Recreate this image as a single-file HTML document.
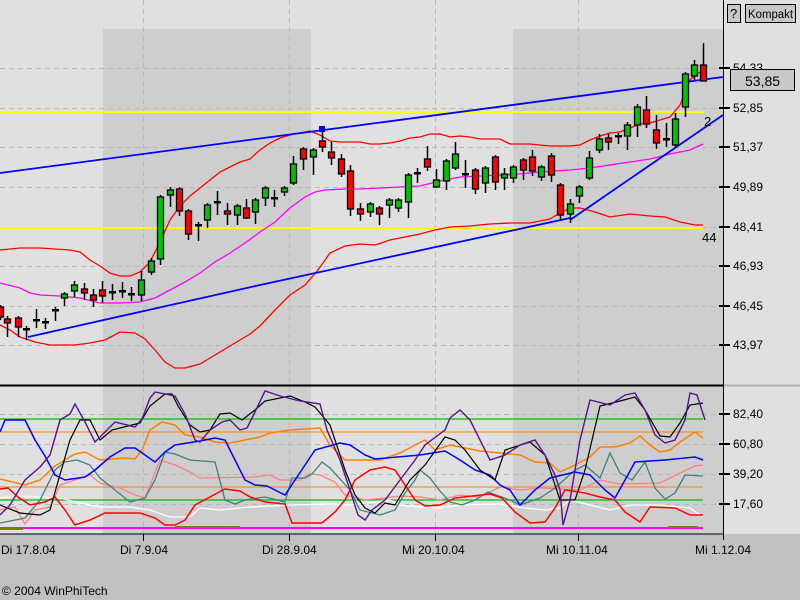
<!DOCTYPE html>
<html><head><meta charset="utf-8"><style>
html,body{margin:0;padding:0;width:800px;height:600px;overflow:hidden;background:#c0c0c0;font-family:"Liberation Sans",sans-serif}
svg{position:absolute;left:0;top:0}
text{font-family:"Liberation Sans",sans-serif;font-size:12px;fill:#000}
</style></head><body>
<svg id="s" width="800" height="600" xmlns="http://www.w3.org/2000/svg">
<rect x="0" y="0" width="800" height="534" fill="#e0e0e0"/>
<rect x="103" y="29" width="208" height="505" fill="#cecece"/>
<rect x="513" y="29" width="210" height="505" fill="#cecece"/>
<g stroke="#b8b8b8" stroke-dasharray="5,4" stroke-width="1">
<line x1="0" y1="68.5" x2="723" y2="68.5"/><line x1="0" y1="108.5" x2="723" y2="108.5"/>
<line x1="0" y1="147.5" x2="723" y2="147.5"/><line x1="0" y1="187.5" x2="723" y2="187.5"/>
<line x1="0" y1="227.5" x2="723" y2="227.5"/><line x1="0" y1="266.5" x2="723" y2="266.5"/>
<line x1="0" y1="306.5" x2="723" y2="306.5"/><line x1="0" y1="345.5" x2="723" y2="345.5"/>
<line x1="0" y1="414.5" x2="723" y2="414.5"/><line x1="0" y1="444.5" x2="723" y2="444.5"/>
<line x1="0" y1="474.5" x2="723" y2="474.5"/><line x1="0" y1="504.5" x2="723" y2="504.5"/>
<line x1="143.5" y1="0" x2="143.5" y2="534"/><line x1="289.5" y1="0" x2="289.5" y2="534"/>
<line x1="435.5" y1="0" x2="435.5" y2="534"/><line x1="578.5" y1="0" x2="578.5" y2="534"/>
</g>
<g id="lines"></g>
<g id="candles"></g>
<line x1="0" y1="385.5" x2="723" y2="385.5" stroke="#000" stroke-width="2"/>
<line x1="723" y1="385.5" x2="800" y2="385.5" stroke="#b0b0b0" stroke-width="2"/>
<line x1="723.5" y1="0" x2="723.5" y2="540" stroke="#000"/>
<line x1="0" y1="534" x2="723" y2="534" stroke="#000"/>
<g stroke="#000" stroke-width="2">
<line x1="719" y1="68" x2="730" y2="68"/><line x1="719" y1="108" x2="730" y2="108"/>
<line x1="719" y1="147" x2="730" y2="147"/><line x1="719" y1="187" x2="730" y2="187"/>
<line x1="719" y1="227" x2="730" y2="227"/><line x1="719" y1="266" x2="730" y2="266"/>
<line x1="719" y1="306" x2="730" y2="306"/><line x1="719" y1="345" x2="730" y2="345"/>
<line x1="719" y1="414" x2="730" y2="414"/><line x1="719" y1="444" x2="730" y2="444"/>
<line x1="719" y1="474" x2="730" y2="474"/><line x1="719" y1="504" x2="730" y2="504"/>
</g>
<g stroke="#000" stroke-width="1">
<line x1="143.5" y1="534" x2="143.5" y2="541"/><line x1="289.5" y1="534" x2="289.5" y2="541"/>
<line x1="435.5" y1="534" x2="435.5" y2="541"/><line x1="578.5" y1="534" x2="578.5" y2="541"/>
</g>
<text x="733" y="72">54,33</text><text x="733" y="112">52,85</text>
<text x="733" y="151">51,37</text><text x="733" y="191">49,89</text>
<text x="733" y="231">48,41</text><text x="733" y="270">46,93</text>
<text x="733" y="310">46,45</text><text x="733" y="349">43,97</text>
<text x="733" y="418">82,40</text><text x="733" y="448">60,80</text>
<text x="733" y="478">39,20</text><text x="733" y="508">17,60</text>
<rect x="730.5" y="69.5" width="64" height="21" fill="#c8c8c8" stroke="#000"/>
<text x="745" y="86" style="font-size:14px">53,85</text>
<rect x="727.5" y="4.5" width="13" height="18" fill="#c8c8c8" stroke="#000"/>
<text x="730" y="18" style="font-size:13px">?</text>
<rect x="745.5" y="4.5" width="50" height="18" fill="#c8c8c8" stroke="#000"/>
<text x="748" y="18" style="font-size:11.5px" textLength="45" lengthAdjust="spacingAndGlyphs">Kompakt</text>
<text x="704" y="126" style="font-size:13px">2</text>
<text x="702" y="242" style="font-size:13px">44</text>
<text x="1" y="554">Di 17.8.04</text><text x="120" y="554">Di 7.9.04</text>
<text x="262" y="554">Di 28.9.04</text><text x="402" y="554">Mi 20.10.04</text>
<text x="546" y="554">Mi 10.11.04</text><text x="695" y="554">Mi 1.12.04</text>
<text x="2" y="595">© 2004 WinPhiTech</text>
</svg>
<script>
var NS="http://www.w3.org/2000/svg";
function pl(g,pts,col,w){var p=document.createElementNS(NS,"polyline");var s="";for(var i=0;i<pts.length;i+=2)s+=pts[i]+","+pts[i+1]+" ";p.setAttribute("points",s);p.setAttribute("fill","none");p.setAttribute("stroke",col);p.setAttribute("stroke-width",w||1.3);g.appendChild(p);}
var L=document.getElementById("lines");
pl(L,[0,419,703,419],"#00c000",1.3);pl(L,[0,500,703,500],"#00c000",1.3);
pl(L,[0,432,703,432],"#ff8000",1);pl(L,[0,487,703,487],"#ff8000",1);
pl(L,[0,528,703,528],"#ff00ff",2);
pl(L,[0,529,23,529],"#808000",2);pl(L,[175,527,240,527],"#808000",2);pl(L,[668,527,698,527],"#808000",2);
pl(L,[0,112,703,112],"#ffff00",2);pl(L,[0,228,703,228],"#ffff00",2);
pl(L,[0,250,20,248,40,248,70,250,80,252,90,260,100,266,110,273,120,276,130,276,140,272,150,262,160,242,170,220,180,206,190,196,200,188,210,180,220,172,230,167,240,162,250,159,260,150,270,143,280,138,290,135,300,133,310,131,320,135,330,141,340,142,360,142,370,144,380,144,390,143,400,141,410,138,420,137,430,134,440,134,450,137,460,136,470,137,480,139,500,139,510,144,530,144,550,146,570,146,580,145,590,140,600,136,610,133,620,132,630,128,640,124,650,123,660,120,670,117,680,105,690,80,697,73,703,72],"#ff0000",1.3);
pl(L,[0,325,10,330,20,337,35,342,50,345,75,345,90,343,105,340,120,332,135,333,145,339,155,350,165,362,175,368,185,368,200,364,215,355,230,346,250,334,260,326,275,310,290,295,305,285,318,270,330,253,345,246,360,244,375,245,390,240,400,238,420,234,435,230,450,227,470,226,490,224,510,223,530,223,550,219,560,213,570,208,580,208,595,212,610,217,630,214,650,216,665,217,680,222,695,225,703,225],"#ff0000",1.3);
pl(L,[0,283,20,288,30,293,40,295,60,296,80,298,100,303,120,303,140,302,155,298,170,290,185,282,200,273,215,262,230,253,245,243,260,232,275,222,290,208,305,197,315,192,325,190,345,189,360,189,380,188,400,187,420,186,440,181,460,177,480,176,500,175,520,174,540,172,570,170,590,168,610,165,630,162,650,159,670,154,690,150,703,144],"#ff00ff",1.3);
pl(L,[0,173,723,77],"#0000ff",1.8);
pl(L,[28,337,260,285,570,218],"#0000ff",1.8);
pl(L,[570,220,723,115],"#0000ff",1.8);
pl(L,[0,498,20,496,40,497,60,498,80,503,100,507,130,507,150,510,170,517,190,517,200,508,220,510,250,507,290,505,330,504,350,505,375,502,390,500,400,505,420,507,440,508,460,505,500,504,525,508,545,510,560,508,570,500,590,505,610,510,630,505,660,505,690,508,703,517],"#ffffff",1.3);
pl(L,[0,510,15,507,25,524,35,510,50,507,60,485,75,480,90,475,100,483,120,488,135,495,145,498,160,460,175,465,190,472,200,478,255,477,270,475,280,480,300,480,310,474,320,475,335,482,345,495,365,500,385,498,400,496,420,497,440,500,460,495,480,497,500,487,520,490,540,488,580,490,600,480,620,484,660,483,680,473,695,466,703,465],"#ff8080",1.3);
pl(L,[0,523,25,518,40,500,55,470,65,462,77,460,90,465,100,478,115,490,130,502,145,498,155,480,165,452,175,454,190,460,215,462,225,500,235,504,245,500,265,497,285,502,292,478,305,478,312,474,322,462,330,468,340,479,350,490,360,510,380,515,395,510,405,493,415,480,420,470,430,478,440,491,450,502,462,505,475,500,488,492,510,500,520,505,540,498,555,488,575,470,585,465,600,478,610,453,620,473,632,480,645,462,655,488,665,499,675,493,685,475,703,476],"#3f7f7f",1.3);
pl(L,[0,489,8,488,18,497,30,505,45,502,55,497,65,510,75,525,90,520,105,513,140,513,155,518,165,525,175,525,185,520,195,505,210,497,225,489,240,491,250,497,265,502,285,504,292,523,322,523,335,512,345,500,355,480,370,470,385,467,395,470,405,485,415,500,425,506,440,505,455,498,490,494,502,498,515,512,530,523,545,522,555,508,565,490,585,493,600,497,615,500,625,512,640,522,650,507,675,508,690,515,703,515],"#ff0000",1.5);
pl(L,[0,479,25,485,40,480,55,466,75,454,85,452,100,460,125,458,135,459,142,450,150,430,162,422,175,425,185,435,200,437,215,442,230,443,260,437,270,433,290,430,320,428,330,445,345,460,360,460,380,460,400,453,415,445,425,440,435,450,450,445,480,451,520,455,535,462,550,463,560,472,575,465,590,457,600,447,615,447,630,443,640,436,650,445,660,452,670,450,680,442,695,432,703,438],"#ff8000",1.5);
pl(L,[0,432,5,420,25,420,35,440,45,456,55,475,65,480,85,477,95,470,110,457,125,448,135,448,145,455,155,462,165,452,175,445,200,441,215,438,225,440,235,460,245,480,255,485,267,486,285,495,295,480,305,465,315,450,340,443,350,445,365,455,375,459,420,455,445,451,460,460,475,470,490,475,500,485,510,490,520,505,535,490,550,478,575,472,590,475,605,490,615,498,625,480,635,462,665,460,695,457,703,460],"#0000ff",1.5);
pl(L,[0,505,20,513,40,515,50,510,55,492,70,440,80,420,90,420,100,440,112,430,140,423,150,406,165,394,172,394,178,406,190,425,200,432,210,430,220,414,230,413,242,420,255,410,265,401,290,396,305,402,315,407,330,425,345,470,355,495,365,508,375,513,385,503,395,505,410,480,425,465,445,437,455,440,465,450,480,470,495,480,505,450,530,442,545,455,560,500,575,500,585,470,600,406,620,401,635,397,645,410,660,436,670,437,680,423,690,405,703,403],"#000000",1.2);
pl(L,[0,515,10,505,25,480,40,467,50,455,60,420,70,414,75,404,85,422,95,442,105,432,115,422,135,427,142,419,150,398,155,392,175,396,185,414,195,440,200,442,210,430,222,422,230,420,240,430,247,428,255,412,265,391,280,396,300,401,320,404,327,430,340,460,350,490,358,515,365,520,372,510,385,500,400,480,415,460,425,445,445,430,450,418,460,410,470,420,480,440,490,460,505,455,520,445,535,440,545,455,555,475,560,490,563,525,570,500,580,440,590,400,610,405,625,395,635,393,645,410,655,435,665,443,675,440,685,420,690,393,697,395,705,420],"#55148f",1.4);
var C=[[0,307,317,'r',305,320],[7,319,323,'r',316,337],[18,318,327,'r',316,337],[26,328,330,'d',326,340],[36,319,321,'d',309,328],[45,321,323,'d',318,329],[55,309,311,'d',307,321],[64,294,298,'g',292,306],[74,285,291,'g',281,297],[84,289,293,'r',283,300],[93,295,300,'r',289,307],[102,290,296,'r',281,303],[112,291,293,'d',284,300],[122,290,292,'d',282,298],[131,293,295,'d',287,301],[141,280,295,'g',271,301],[151,261,272,'g',258,275],[160,197,259,'g',195,265],[170,190,195,'g',187,207],[179,189,211,'r',187,216],[188,211,234,'r',209,240],[198,224,226,'d',222,241],[207,205,220,'g',203,228],[217,201,203,'d',191,215],[227,211,214,'r',203,225],[237,206,215,'g',204,225],[246,208,218,'r',199,219],[255,200,212,'g',198,224],[265,188,198,'g',186,206],[274,197,199,'d',190,207],[284,188,192,'g',186,196],[293,164,183,'g',156,185],[303,149,159,'r',147,170],[313,150,157,'g',148,175],[322,141,147,'r',128,152],[331,152,158,'r',142,165],[341,159,174,'r',154,177],[350,171,209,'r',165,216],[360,209,214,'r',203,221],[370,204,212,'g',202,217],[379,208,214,'r',206,225],[389,200,205,'g',198,218],[398,200,208,'g',198,212],[408,175,202,'g',173,218],[417,172,174,'d',168,183],[427,159,167,'r',146,171],[436,180,187,'g',169,188],[446,161,181,'g',159,190],[455,154,168,'g',142,170],[465,173,175,'d',160,188],[475,170,189,'r',168,194],[485,168,183,'g',166,193],[495,157,182,'r',155,190],[504,174,178,'g',168,190],[513,167,178,'g',165,183],[523,160,170,'r',158,180],[532,157,171,'r',150,176],[541,167,177,'g',165,181],[551,156,175,'r',153,182],[560,185,215,'r',183,220],[570,204,214,'g',199,223],[579,187,196,'g',185,203],[589,158,178,'g',151,180],[599,139,150,'g',134,153],[608,138,142,'r',134,150],[618,135,137,'d',133,144],[627,125,136,'g',122,150],[637,107,125,'g',104,137],[646,110,124,'r',96,128],[656,130,143,'r',115,149],[666,138,140,'d',123,147],[675,119,145,'g',113,148],[685,74,107,'g',72,117],[694,65,76,'g',60,80],[703,65,81,'r',43,81]];
var G=document.getElementById("candles");
C.forEach(function(c){var x=c[0];
var w=document.createElementNS(NS,"line");w.setAttribute("x1",x+0.5);w.setAttribute("x2",x+0.5);w.setAttribute("y1",c[4]);w.setAttribute("y2",c[5]);w.setAttribute("stroke","#000");w.setAttribute("stroke-width",1.5);G.appendChild(w);
var r=document.createElementNS(NS,"rect");
if(c[3]=='d'){r.setAttribute("x",x-3);r.setAttribute("y",c[1]);r.setAttribute("width",7);r.setAttribute("height",2.5);r.setAttribute("fill","#000");}
else{r.setAttribute("x",x-2.5);r.setAttribute("y",c[1]);r.setAttribute("width",6);r.setAttribute("height",Math.max(2,c[2]-c[1]));r.setAttribute("fill",c[3]=='g'?"#00c000":"#ff0000");r.setAttribute("stroke","#000");r.setAttribute("stroke-width",1.3);}
G.appendChild(r);});
var m=document.createElementNS(NS,"rect");m.setAttribute("x",319);m.setAttribute("y",126);m.setAttribute("width",6);m.setAttribute("height",6);m.setAttribute("fill","#0000ff");G.appendChild(m);
</script>
</body></html>
